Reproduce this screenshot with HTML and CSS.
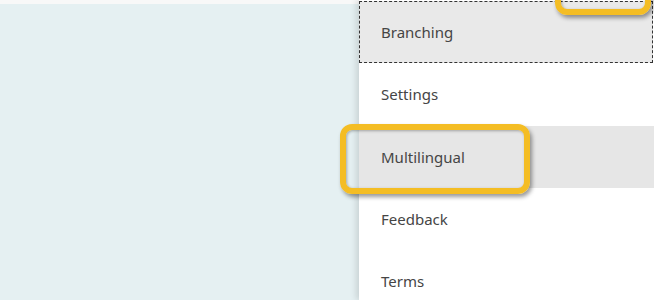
FILE: index.html
```html
<!DOCTYPE html>
<html lang="en">
<head>
    <meta charset="UTF-8">
    <title>Menu</title>
    <link rel="stylesheet" href="styles.css">
</head>
<body>
    <div class="topbar"></div>
    <div class="layout">
        <div class="canvas"></div>
        <nav class="panel">
            <a class="item item-focus">Branching</a>
            <a class="item">Settings</a>
            <a class="item item-hover">Multilingual</a>
            <a class="item">Feedback</a>
            <a class="item">Terms</a>
        </nav>
    </div>
    <div class="callout callout-top"></div>
    <div class="callout callout-main"></div>
</body>
</html>
```
FILE: styles.css
```css
html, body {
    margin: 0;
    height: 100%;
    overflow: hidden;
}

body {
    font-family: "Noto Sans", "Open Sans", sans-serif;
    background-color: #f8f8f8;
    position: relative;
}

.topbar {
    height: 4px;
    background-color: #f8f8f8;
}

.layout {
    display: flex;
    height: 296px;
}

.canvas {
    flex: 1;
    background-color: #e5f0f2;
}

.panel {
    width: 295px;
    margin-top: -4px;
    padding-top: 1px;
    background: white;
    box-shadow: -3px 0 6px rgba(0, 0, 0, 0.12);
    display: flex;
    flex-direction: column;
}

.item {
    display: flex;
    align-items: center;
    height: 62.3px;
    flex-shrink: 0;
    padding-left: 22px;
    box-sizing: border-box;
    font-size: 15px;
    color: #454545;
}

.item-focus {
    background-color: #e9e9e9;
    border: 1px dashed #333;
    padding-left: 21px;
    margin-right: 1px;
}

.item-hover {
    background-color: #e6e6e6;
}

.callout {
    position: absolute;
    border: 6px solid #f4bd24;
    border-radius: 12px;
    box-shadow: 2px 3px 4px rgba(0, 0, 0, 0.4), inset 1px 1px 3px rgba(0, 0, 0, 0.3);
    box-sizing: border-box;
}

.callout-main {
    left: 340px;
    top: 124px;
    width: 190px;
    height: 70px;
}

.callout-top {
    left: 555px;
    top: -56px;
    width: 96px;
    height: 71px;
}
```
